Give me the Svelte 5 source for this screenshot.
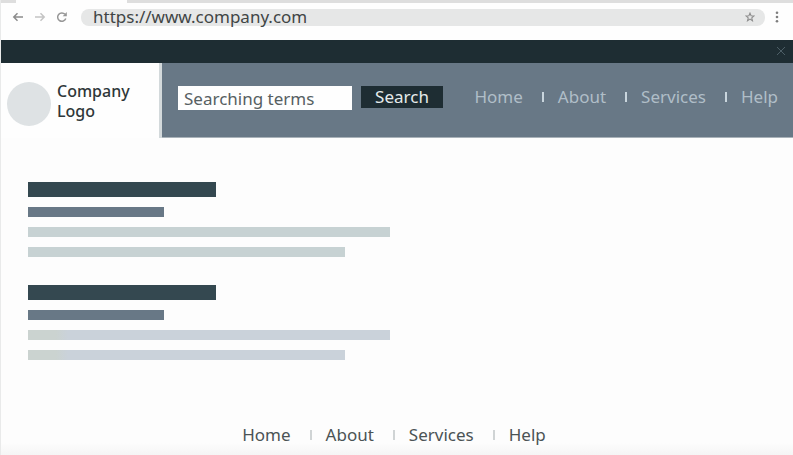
<script>
  const links = ['Home', 'About', 'Services', 'Help'];
  const results = ['mint', 'blue'];
  let address = $state('https://www.company.com');
  let terms = $state('Searching terms');
</script>

<div class="page">
  <div class="tabs"><span class="tab"></span></div>
  <div class="toolbar">
    <button class="tool" aria-label="Back">
      <svg width="12" height="12" viewBox="0 0 12 12"><path d="M11 6H2M5.500 2.300 1.800 6l3.700 3.700" stroke="#8c8c8c" /></svg>
    </button>
    <button class="tool" aria-label="Forward">
      <svg width="12" height="12" viewBox="0 0 12 12"><path d="M1 6h9M6.500 2.300 10.200 6 6.500 9.700" stroke="#c4c4c4" /></svg>
    </button>
    <button class="tool" aria-label="Reload">
      <svg width="12" height="12" viewBox="0 0 12 12"><path d="M9.800 7.500A4.200 4.200 0 1 1 9 3.300" stroke="#979797" /><path d="M10.800 1v4.300H6.700z" fill="#979797" stroke="none" /></svg>
    </button>
    <div class="address">
      <input aria-label="Address" bind:value={address} spellcheck="false" />
      <button class="tool" aria-label="Bookmark">
        <svg width="10" height="10" viewBox="0 0 12 12"><path d="M6 1.300 7.300 4.500l3.500.2L8.100 7l.9 3.500-3-1.900-3 1.900L3.900 7 1.200 4.700l3.500-.2z" stroke="#8c8c8c" stroke-width="1.300" /></svg>
      </button>
    </div>
    <button class="tool menu" aria-label="Menu">
      <svg width="12" height="12" viewBox="0 0 12 12"><g fill="#7e7e7e" stroke="none"><circle cx="6" cy="1.800" r="1.300" /><circle cx="6" cy="6" r="1.300" /><circle cx="6" cy="10.200" r="1.300" /></g></svg>
    </button>
  </div>

  <div class="banner">
    <button class="tool" aria-label="Close">
      <svg width="12" height="12" viewBox="0 0 12 12"><path d="m2 1 8 8M10 1l-8 8" stroke="#4c5e66" stroke-width="1" /></svg>
    </button>
  </div>

  <header>
    <div class="brand">
      <span class="disc"></span>
      <span class="name">Company<br />Logo</span>
    </div>
    <div class="bar">
      <form onsubmit={(e) => e.preventDefault()}>
        <input aria-label="Search terms" bind:value={terms} spellcheck="false" />
        <button>Search</button>
      </form>
      <nav aria-label="Main">
        {#each links as link, i}
          {#if i}<span class="sep"></span>{/if}
          <a href="#{link}">{link}</a>
        {/each}
      </nav>
    </div>
  </header>

  <main>
    {#each results as tone}
      <article class={tone}>
        <div class="title"></div>
        <div class="subtitle"></div>
        <div class="line"></div>
        <div class="line short"></div>
      </article>
    {/each}
  </main>

  <footer>
    <nav aria-label="Footer">
      {#each links as link, i}
        {#if i}<span class="sep"></span>{/if}
        <a href="#{link}">{link}</a>
      {/each}
    </nav>
  </footer>
</div>

<style>
  :global(body) {
    margin: 0;
    background: #fdfdfd;
  }
  .page,
  .page * {
    box-sizing: border-box;
  }
  .page {
    display: flex;
    flex-direction: column;
    min-height: 100vh;
    border-left: 1px solid #e9eaea;
    font: 17px/20px 'Noto Sans', sans-serif;
    color: #4b5355;
  }
  input,
  button {
    font: inherit;
    color: inherit;
    border: 0;
    padding: 0;
    margin: 0;
    min-width: 0;
    background: none;
    outline: none;
  }
  svg {
    display: block;
    fill: none;
    stroke-width: 1.5;
  }
  .tool {
    display: flex;
    flex: none;
  }
  .tabs {
    height: 3px;
    padding-left: 15px;
    background: #dedede;
  }
  .tab {
    display: block;
    width: 111px;
    height: 3px;
    background: #fefefe;
  }
  .toolbar {
    display: flex;
    align-items: center;
    gap: 10px;
    height: 37px;
    padding: 0 10px 9px 11px;
    background: #fefefe;
  }
  .address {
    display: flex;
    flex: 1;
    align-items: center;
    height: 17px;
    margin-left: 3px;
    padding: 0 10px 0 12px;
    border-radius: 8px;
    background: #e6e7e7;
  }
  .address input {
    flex: 1;
    height: 20px;
    color: #414545;
  }
  .menu {
    margin-left: -4px;
  }
  .banner {
    display: flex;
    align-items: center;
    justify-content: flex-end;
    height: 23px;
    padding-right: 6px;
    background: #1e2d33;
  }
  header {
    display: flex;
    height: 75px;
  }
  .brand {
    display: flex;
    flex: none;
    align-items: center;
    gap: 6px;
    width: 161px;
    padding: 6px 0 0 6px;
    border-right: 3px solid #d3d9db;
    background: #fefefe;
  }
  .disc {
    width: 44px;
    height: 44px;
    border-radius: 50%;
    background: #dee2e4;
  }
  .name {
    margin-top: -6px;
    font-size: 16px;
    font-weight: 500;
    color: #2f3739;
  }
  .bar {
    display: flex;
    flex: 1;
    justify-content: space-between;
    align-items: flex-start;
    padding: 23px 15px 0 16px;
    background: #687886;
    border-bottom: 1px solid #a9b2b9;
  }
  form {
    display: flex;
    gap: 9px;
  }
  form input {
    width: 174px;
    height: 24px;
    padding: 0 6px;
    background: #fefefe;
    color: #566062;
  }
  form button {
    width: 82px;
    height: 22px;
    background: #1e2d33;
    color: #e6ebec;
  }
  nav {
    display: flex;
    align-items: center;
  }
  a {
    color: inherit;
    text-decoration: none;
  }
  .sep {
    width: 2px;
    height: 10px;
    margin: 0 14px 0 19px;
  }
  header nav {
    margin-top: 1px;
    color: #b0bec8;
  }
  header .sep {
    background: #c9d5dd;
  }
  main {
    display: flex;
    flex: 1;
    flex-direction: column;
    gap: 28px;
    padding: 44px 27px 28px;
  }
  article {
    display: flex;
    flex-direction: column;
    gap: 10px;
  }
  .title {
    max-width: 188px;
    height: 15px;
    background: #344850;
  }
  .subtitle {
    max-width: 136px;
    height: 10px;
    background: #687886;
  }
  .line {
    max-width: 362px;
    height: 10px;
    background: #c7d2d3;
  }
  .short {
    max-width: 317px;
  }
  .blue .line {
    background: linear-gradient(90deg, #cbd3d0 28px, #cad2da 40px);
  }
  footer {
    display: flex;
    justify-content: center;
    padding: 0 6px 10px 0;
    background: linear-gradient(#fdfdfd 60%, #f5f5f5);
  }
  footer .sep {
    background: #d0d4d5;
  }
</style>
